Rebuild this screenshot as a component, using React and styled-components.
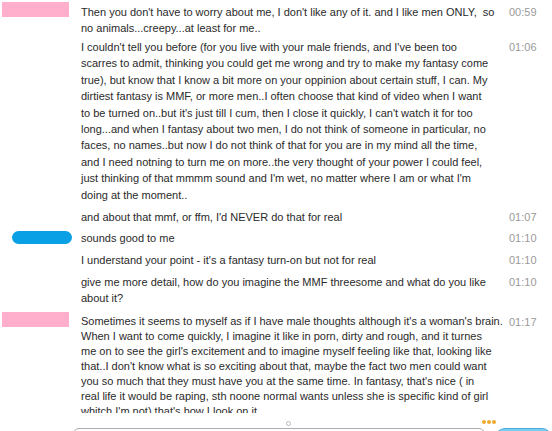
import React from "react";
import styled, { createGlobalStyle } from "styled-components";

const GlobalStyle = createGlobalStyle`
  html, body {
    margin: 0;
    padding: 0;
    background: #fff;
  }
  body {
    font-family: Tahoma, "Liberation Sans", Arial, sans-serif;
  }
`;

const Window = styled.div`
  width: 552px;
  height: 431px;
  position: relative;
  overflow: hidden;
  background: #fff;
`;

const History = styled.div`
  height: 413px;
  overflow: hidden;
  padding-top: 4px;
  box-sizing: border-box;
`;

const Row = styled.div`
  display: grid;
  grid-template-columns: 81px 428px 43px;
  margin-bottom: ${(p) => p.$gap ?? 6}px;
`;

const NameCell = styled.div`
  position: relative;
`;

const NameBar = styled.div`
  position: absolute;
  left: ${(p) => (p.$who === "me" ? 12 : 2)}px;
  top: ${(p) => (p.$who === "me" ? 1 : -2)}px;
  width: ${(p) => (p.$who === "me" ? 60 : 67)}px;
  height: ${(p) => (p.$who === "me" ? 13 : 15)}px;
  border-radius: ${(p) => (p.$who === "me" ? 7 : 0)}px;
  background: ${(p) => (p.$who === "me" ? "#0aa0e6" : "#ffaecb")};
`;

const Body = styled.div`
  font-size: 11px;
  line-height: ${(p) => p.$lh || 16}px;
  color: #2a2a2a;
`;

const Line = styled.div`
  white-space: pre;
`;

const Time = styled.div`
  font-size: 11px;
  line-height: 16px;
  color: #9a9a9a;
`;

const Footer = styled.div`
  display: flex;
  align-items: flex-start;
  padding-left: 73px;
  height: 18px;
`;

const InputWrap = styled.div`
  position: relative;
  width: 430px;
`;

const InputBox = styled.div`
  margin-top: 15px;
  height: 20px;
  border: 1px solid #a9aeb4;
  border-radius: 6px;
  box-sizing: border-box;
  background: #fff;
`;

const StatusDot = styled.div`
  position: absolute;
  left: 213px;
  top: 8px;
  width: 5px;
  height: 5px;
  border-radius: 50%;
  border: 1px solid #b8b8b8;
  box-sizing: border-box;
`;

const Typing = styled.div`
  position: absolute;
  left: 409px;
  top: 7px;
  display: flex;
  gap: 1px;
  & > span {
    width: 4px;
    height: 4px;
    border-radius: 50%;
    background: #f0a932;
  }
`;

const SendButton = styled.div`
  margin-left: 10px;
  margin-top: 15px;
  width: 60px;
  height: 20px;
  border-radius: 10px;
  background: linear-gradient(#7fd0f4, #2aa6e2);
  border: 1px solid #4aa9da;
  box-sizing: border-box;
`;

const messages = [
  {
    who: "her",
    time: "00:59",
    gap: 3,
    lines: [
      "Then you don't have to worry about me, I don't like any of it. and I like men ONLY,  so",
      "no animals...creepy...at least for me..",
    ],
  },
  {
    time: "01:06",
    lh: 16.4,
    lines: [
      "I couldn't tell you before (for you live with your male friends, and I've been too",
      "scarres to admit, thinking you could get me wrong and try to make my fantasy come",
      "true), but know that I know a bit more on your oppinion about certain stuff, I can. My",
      "dirtiest fantasy is MMF, or more men..I often choose that kind of video when I want",
      "to be turned on..but it's just till I cum, then I close it quickly, I can't watch it for too",
      "long...and when I fantasy about two men, I do not think of someone in particular, no",
      "faces, no names..but now I do not think of that for you are in my mind all the time,",
      "and I need notning to turn me on more..the very thought of your power I could feel,",
      "just thinking of that mmmm sound and I'm wet, no matter where I am or what I'm",
      "doing at the moment..",
    ],
  },
  { time: "01:07", gap: 5, lines: ["and about that mmf, or ffm, I'd NEVER do that for real"] },
  { who: "me", time: "01:10", lines: ["sounds good to me"] },
  { time: "01:10", lines: ["I understand your point - it's a fantasy turn-on but not for real"] },
  {
    time: "01:10",
    gap: 8,
    lines: [
      "give me more detail, how do you imagine the MMF threesome and what do you like",
      "about it?",
    ],
  },
  {
    who: "her",
    time: "01:17",
    lh: 15,
    lines: [
      "Sometimes it seems to myself as if I have male thoughts although it's a woman's brain.",
      "When I want to come quickly, I imagine it like in porn, dirty and rough, and it turnes",
      "me on to see the girl's excitement and to imagine myself feeling like that, looking like",
      "that..I don't know what is so exciting about that, maybe the fact two men could want",
      "you so much that they must have you at the same time. In fantasy, that's nice ( in",
      "real life it would be raping, sth noone normal wants unless she is specific kind of girl",
      "whitch I'm not) that's how I look on it",
    ],
  },
];

export default function App() {
  return (
    <Window>
      <GlobalStyle />
      <History>
        {messages.map((m, i) => (
          <Row key={i} $gap={m.gap}>
            <NameCell>{m.who && <NameBar $who={m.who} />}</NameCell>
            <Body $lh={m.lh}>
              {m.lines.map((l, j) => (
                <Line key={j}>{l}</Line>
              ))}
            </Body>
            <Time>{m.time}</Time>
          </Row>
        ))}
      </History>
      <Footer>
        <InputWrap>
          <StatusDot />
          <Typing>
            <span />
            <span />
            <span />
          </Typing>
          <InputBox />
        </InputWrap>
        <SendButton />
      </Footer>
    </Window>
  );
}
